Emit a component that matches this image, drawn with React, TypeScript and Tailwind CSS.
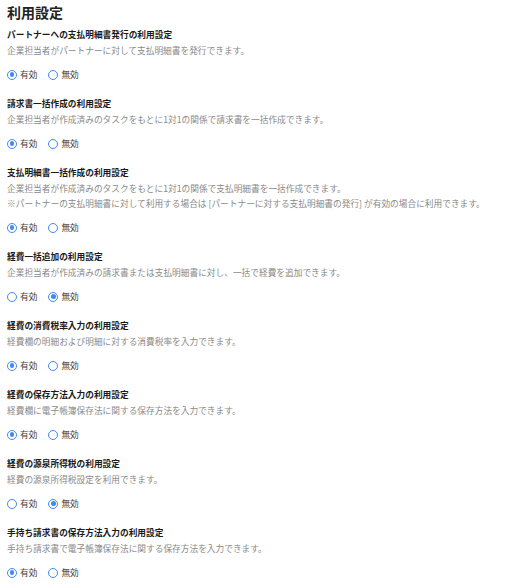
import { useState } from "react";

type Setting = {
  id: string;
  title: string;
  desc: string[];
  enabled: boolean;
};

const initialSettings: Setting[] = [
  {
    id: "partner-payment",
    title: "パートナーへの支払明細書発行の利用設定",
    desc: ["企業担当者がパートナーに対して支払明細書を発行できます。"],
    enabled: true,
  },
  {
    id: "bulk-invoice",
    title: "請求書一括作成の利用設定",
    desc: ["企業担当者が作成済みのタスクをもとに1対1の関係で請求書を一括作成できます。"],
    enabled: true,
  },
  {
    id: "bulk-payment",
    title: "支払明細書一括作成の利用設定",
    desc: [
      "企業担当者が作成済みのタスクをもとに1対1の関係で支払明細書を一括作成できます。",
      "※パートナーの支払明細書に対して利用する場合は [パートナーに対する支払明細書の発行] が有効の場合に利用できます。",
    ],
    enabled: true,
  },
  {
    id: "bulk-expense",
    title: "経費一括追加の利用設定",
    desc: ["企業担当者が作成済みの請求書または支払明細書に対し、一括で経費を追加できます。"],
    enabled: false,
  },
  {
    id: "expense-tax",
    title: "経費の消費税率入力の利用設定",
    desc: ["経費欄の明細および明細に対する消費税率を入力できます。"],
    enabled: true,
  },
  {
    id: "expense-storage",
    title: "経費の保存方法入力の利用設定",
    desc: ["経費欄に電子帳簿保存法に関する保存方法を入力できます。"],
    enabled: true,
  },
  {
    id: "expense-withholding",
    title: "経費の源泉所得税の利用設定",
    desc: ["経費の源泉所得税設定を利用できます。"],
    enabled: false,
  },
  {
    id: "manual-invoice",
    title: "手持ち請求書の保存方法入力の利用設定",
    desc: ["手持ち請求書で電子帳簿保存法に関する保存方法を入力できます。"],
    enabled: true,
  },
];

const Radio = ({ checked, label, onClick }: { checked: boolean; label: string; onClick: () => void }) => (
  <button type="button" onClick={onClick} className="flex items-center gap-[3px] cursor-pointer">
    <span className="flex items-center justify-center w-[10px] h-[10px] rounded-full border-[1.7px] border-[#4189f0] bg-white">
      {checked && <span className="w-[4.6px] h-[4.6px] rounded-full bg-[#4189f0]" />}
    </span>
    <span className="text-[8.7px] leading-[14px] text-[#3a3a3a]">{label}</span>
  </button>
);

export default function App() {
  const [settings, setSettings] = useState(initialSettings);

  const toggle = (id: string, value: boolean) =>
    setSettings((prev) => prev.map((s) => (s.id === id ? { ...s, enabled: value } : s)));

  return (
    <div
      className="min-h-screen bg-white px-[7px] pt-[2px]"
      style={{ fontFamily: '"Noto Sans CJK JP", "Noto Sans", sans-serif' }}
    >
      <h1 className="text-[14px] leading-[20px] font-bold text-[#222] mb-[5px]">利用設定</h1>

      {settings.map((s) => (
        <section key={s.id} className="pb-[14.5px]">
          <h2 className="text-[8.7px] leading-[16px] font-bold text-[#1a1a1a]">{s.title}</h2>
          {s.desc.map((line, i) => (
            <p key={i} className="text-[8.7px] leading-[15px] text-[#8a8a8a]">
              {line}
            </p>
          ))}
          <div className="flex items-center gap-[11px] mt-[9.5px] h-[14px]">
            <Radio checked={s.enabled} label="有効" onClick={() => toggle(s.id, true)} />
            <Radio checked={!s.enabled} label="無効" onClick={() => toggle(s.id, false)} />
          </div>
        </section>
      ))}
    </div>
  );
}
